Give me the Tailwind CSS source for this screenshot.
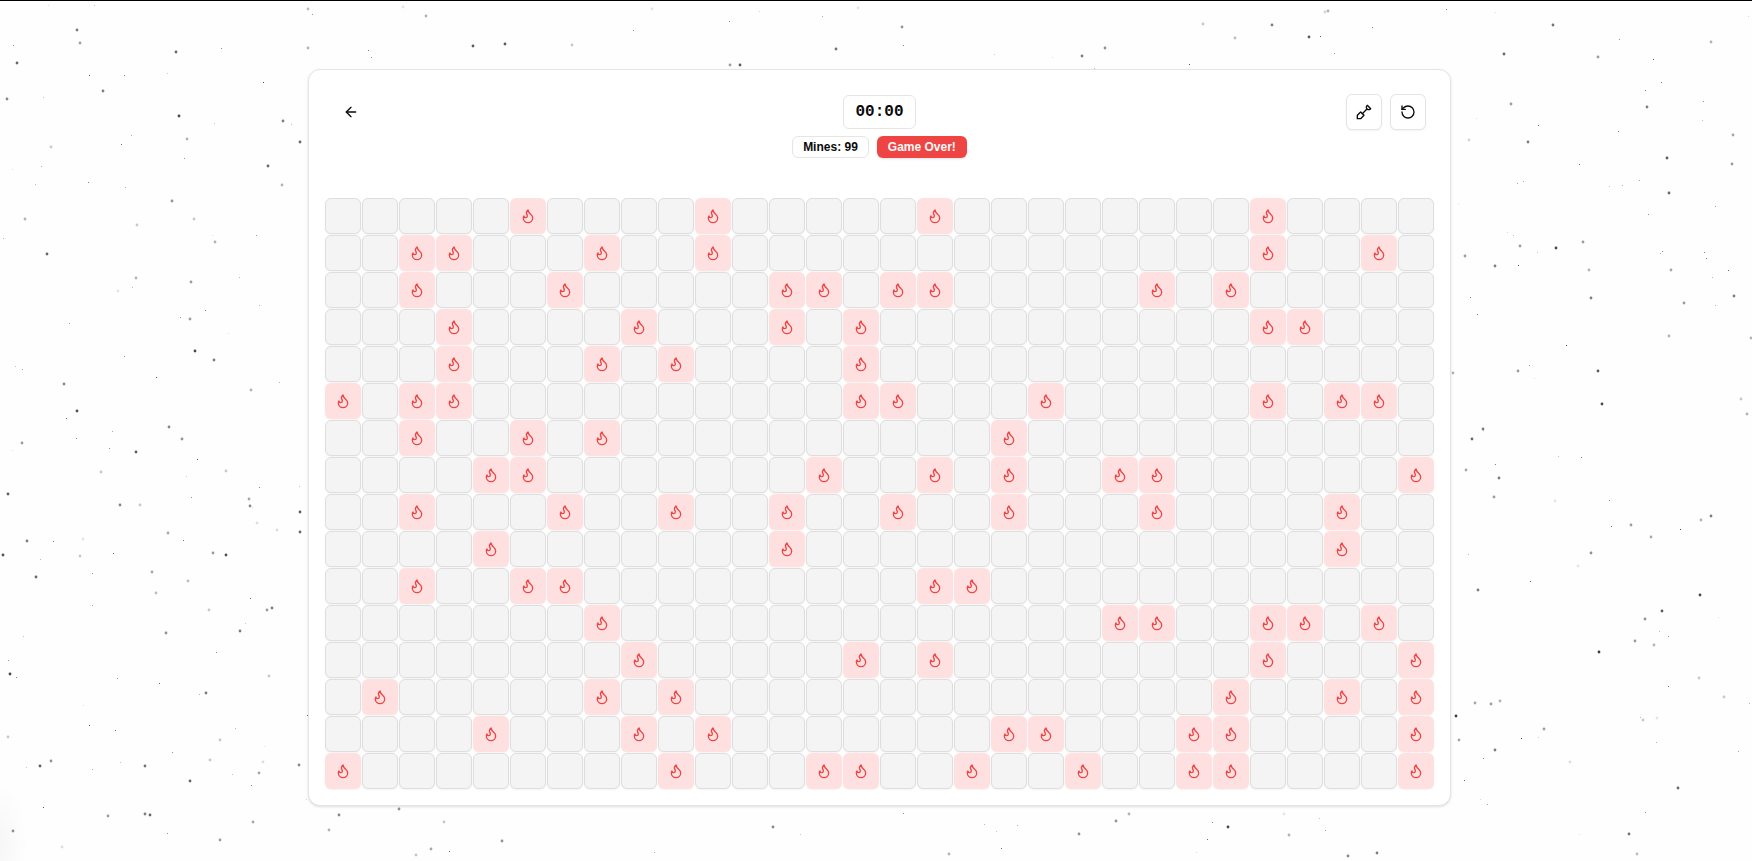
<!DOCTYPE html>
<html lang="en">
<head>
<meta charset="utf-8">
<meta name="viewport" content="width=device-width, initial-scale=1">
<title>Minesweeper</title>
<script src="https://cdn.jsdelivr.net/npm/@tailwindcss/browser@4"></script>
</head>
<body class="relative min-h-screen overflow-hidden border-t border-black bg-[#fefefe] font-['Liberation_Sans',sans-serif] text-neutral-950">
<svg id="stars" class="absolute inset-0 -mt-px h-full w-full" aria-hidden="true"></svg>
<div class="absolute bottom-0 left-0 h-20 w-7 bg-radial-[at_0%_80%] from-black/3 to-transparent to-70%" aria-hidden="true"></div>

<main class="relative flex min-h-[860px] items-start justify-center pt-17 pl-[7px]">
  <section class="rounded-xl border border-neutral-200 bg-white shadow">
    <header class="grid grid-cols-[1fr_auto_1fr] items-start p-6">
      <button type="button" aria-label="Back" class="flex size-9 items-center justify-center rounded-md">
        <svg class="size-4" viewBox="0 0 24 24" fill="none" stroke="currentColor" stroke-width="2" stroke-linecap="round" stroke-linejoin="round"><path d="m12 19-7-7 7-7"/><path d="M19 12H5"/></svg>
      </button>
      <div class="flex flex-col items-center gap-[7px] pt-px">
        <div class="rounded-md border border-neutral-200 px-[11px] py-0.5 font-['Liberation_Mono',monospace] text-base leading-7 font-bold">00:00</div>
        <div class="flex gap-2 text-xs leading-4 font-bold">
          <div class="rounded-md border border-neutral-200 px-2.5 py-0.5">Mines: 99</div>
          <div class="rounded-md border border-transparent bg-[#ef4444] px-2.5 py-0.5 text-neutral-50 shadow">Game Over!</div>
        </div>
      </div>
      <div class="flex justify-end gap-2">
        <button type="button" aria-label="Dig" class="flex size-9 items-center justify-center rounded-md border border-neutral-200 bg-white shadow-xs">
          <svg class="size-4" viewBox="0 0 24 24" fill="none" stroke="currentColor" stroke-width="2" stroke-linecap="round" stroke-linejoin="round"><path d="M2 22v-5l5-5 5 5-5 5z"/><path d="M9.5 14.5 16 8"/><path d="m17 2 5 5-.5.5a3.53 3.53 0 0 1-5 0 3.53 3.53 0 0 1 0-5L17 2"/></svg>
        </button>
        <button type="button" aria-label="Restart" class="flex size-9 items-center justify-center rounded-md border border-neutral-200 bg-white shadow-xs">
          <svg class="size-4" viewBox="0 0 24 24" fill="none" stroke="currentColor" stroke-width="2" stroke-linecap="round" stroke-linejoin="round"><path d="M3 12a9 9 0 1 0 9-9 9.75 9.75 0 0 0-6.74 2.74L3 8"/><path d="M3 3v5h5"/></svg>
        </button>
      </div>
    </header>
    <div id="board" class="grid grid-cols-[repeat(30,auto)] gap-px p-4"></div>
  </section>
</main>

<script>
// Mine columns for each board row
const mines = [
  [5,10,16,25],
  [2,3,7,10,25,28],
  [2,6,12,13,15,16,22,24],
  [3,8,12,14,25,26],
  [3,7,9,14],
  [0,2,3,14,15,19,25,27,28],
  [2,5,7,18],
  [4,5,13,16,18,21,22,29],
  [2,6,9,12,15,18,22,27],
  [4,12,27],
  [2,5,6,16,17],
  [7,21,22,25,26,28],
  [8,14,16,25,29],
  [1,7,9,24,27,29],
  [4,8,10,18,19,23,24,29],
  [0,9,13,14,17,20,23,24,29]
];
const flame = '<svg class="size-4" viewBox="0 0 24 24" fill="none" stroke="currentColor" stroke-width="2" stroke-linecap="round" stroke-linejoin="round"><path d="M8.5 14.5A2.5 2.5 0 0 0 11 12c0-1.38-.5-2-1-3-1.072-2.143-.224-4.054 2-6 .5 2.5 2 4.9 4 6.5 2 1.6 3 3.5 3 5.5a7 7 0 1 1-14 0c0-1.153.433-2.294 1-3a2.5 2.5 0 0 0 2.5 2.5z"/></svg>';
let cells = '';
mines.forEach((cols, r) => {
  for (let c = 0; c < 30; c++) {
    cells += cols.includes(c)
      ? `<button type="button" aria-label="Mine, row ${r + 1}, column ${c + 1}" class="flex size-9 items-center justify-center rounded-md bg-[#ffe0e0] text-[#ef4444] shadow-xs">${flame}</button>`
      : `<button type="button" aria-label="Row ${r + 1}, column ${c + 1}" class="size-9 rounded-md border border-[#dedede] bg-[#f4f4f4] shadow-xs"></button>`;
  }
});
document.getElementById('board').innerHTML = cells;

// Star field: x, y, opacity in percent
const large = [
  77,30,60, 80,43,45, 176,52,70, 17,63,70, 103,91,60, 7,99,55, 179,116,85, 283,121,60, 187,139,35, 51,147,25,
  300,142,70, 268,166,70, 282,185,35, 172,201,50, 25,219,35, 194,219,25, 137,225,25, 215,242,35, 47,254,70,
  136,278,35, 191,282,45, 118,291,12, 190,319,45, 195,351,85, 214,360,60, 64,384,55, 251,390,35, 77,411,80,
  169,427,55, 308,9,30, 308,48,35,
  22,443,45, 182,439,50, 136,452,75, 101,472,25, 226,471,25, 8,494,75, 120,505,55, 140,505,25, 249,499,40,
  250,506,55, 300,512,75, 257,523,15, 277,530,15, 300,532,70, 168,533,40, 27,541,60, 83,539,12, 3,555,80,
  80,556,25, 213,553,45, 226,555,80, 36,577,70, 152,572,40, 188,581,30, 156,593,30, 209,610,25, 267,610,45,
  272,608,60, 166,633,50, 240,631,60, 10,674,85, 269,676,25, 206,693,60, 8,737,25, 220,740,25, 51,761,50,
  40,766,75, 145,766,65, 210,760,25, 263,762,15, 299,765,55, 259,773,40, 190,781,70, 108,816,45, 145,814,60,
  150,815,70, 253,822,40, 13,831,50, 220,840,45, 62,847,15,
  1553,25,65, 1711,42,35, 1504,54,70, 1598,57,45, 1511,104,45, 1647,107,60, 1469,140,20, 1528,142,60,
  1733,135,40, 1667,158,75, 1732,164,45, 1669,193,70, 1520,246,45, 1583,242,45, 1556,248,85, 1465,256,45,
  1495,266,60, 1589,270,35, 1671,270,40, 1591,298,60, 1734,296,60, 1684,303,45, 1669,336,35, 1751,338,35,
  1453,373,35, 1518,371,45, 1598,371,75, 1741,399,25, 1602,404,85, 1747,414,35, 1483,429,60,
  1472,439,70, 1466,470,40, 1499,478,60, 1494,497,45, 1555,501,12, 1711,516,60, 1701,520,35, 1631,525,45,
  1651,537,40, 1591,553,50, 1578,566,12, 1478,590,60, 1700,595,85, 1662,611,75, 1645,619,50, 1635,641,45,
  1654,645,35, 1599,652,90, 1699,678,25, 1475,703,40, 1491,704,45, 1500,701,35, 1724,697,25, 1456,716,90,
  1643,720,25, 1657,718,12, 1544,729,45, 1459,740,40, 1495,750,60, 1570,762,15, 1678,788,70, 1629,834,65,
  1637,854,30,
  403,7,12, 426,16,35, 473,46,75, 505,44,75, 572,45,25, 652,9,12, 730,65,45, 740,65,75, 836,49,65, 858,8,12,
  902,27,50, 1082,56,60, 1105,48,50, 1203,24,25, 1235,38,30, 1272,25,60, 1309,37,75, 1325,12,20, 1328,11,35,
  339,815,55, 399,809,50, 329,830,35, 444,822,25, 502,841,50, 431,849,40, 416,855,25, 773,827,55,
  1129,814,35, 1116,821,50, 1079,834,50, 1228,827,85, 1284,814,12, 1289,835,35, 949,854,35, 1377,853,60, 1348,856,55
];
const small = [
  13,45,50, 94,5,30, 48,5,15, 221,48,60, 89,75,80, 124,75,60, 167,73,25, 263,82,90, 43,97,30, 214,123,30, 291,124,30,
  131,135,40, 121,144,70, 184,158,50, 41,166,40, 12,169,15, 35,184,30, 88,182,60, 125,187,40, 3,238,35, 212,235,15,
  256,235,45, 239,277,35, 132,287,30, 259,305,35, 205,310,60, 180,317,50, 69,323,45, 228,333,15, 124,356,50,
  15,366,30, 22,369,45, 156,377,85, 279,382,35, 66,418,70,
  76,438,60, 112,431,40, 12,450,15, 109,448,60, 197,459,80, 186,476,25, 259,487,60, 299,486,30, 191,497,55,
  252,507,20, 53,541,60, 183,540,70, 113,553,75, 40,559,35, 92,573,50, 92,605,45, 250,598,70, 245,623,25,
  23,636,30, 216,652,55, 8,660,50, 16,677,60, 117,678,50, 159,683,75, 199,694,35, 83,705,15, 89,725,80, 115,730,65,
  235,728,35, 307,715,70, 172,752,55, 264,746,12, 26,767,25, 120,762,30, 92,769,40, 232,774,30, 251,785,60,
  43,807,80, 167,833,55, 306,799,20,
  1446,9,40, 1495,12,15, 1748,16,20, 1619,39,55, 1653,59,80, 1661,82,60, 1645,90,60, 1703,101,50, 1476,118,15,
  1538,125,70, 1702,120,30, 1618,131,60, 1579,164,70, 1517,183,40, 1523,181,40, 1609,186,30, 1622,185,40,
  1639,180,40, 1458,203,12, 1715,206,45, 1648,214,55, 1507,232,20, 1513,235,35, 1537,252,30, 1518,265,80,
  1660,253,40, 1662,251,55, 1704,252,60, 1706,258,60, 1728,270,75, 1712,277,35, 1470,297,60, 1715,305,35,
  1477,314,60, 1566,345,85, 1529,365,50, 1534,378,15, 1483,430,30, 1558,456,30, 1581,457,60, 1495,464,60,
  1609,500,55, 1611,526,70, 1680,529,90, 1468,554,35, 1530,581,75, 1718,617,15, 1659,631,35, 1668,636,50,
  1668,686,70, 1749,703,35, 1640,717,35, 1521,738,95, 1538,737,25, 1656,742,35, 1738,751,40, 1483,758,60,
  1464,780,75, 1480,799,20, 1487,804,40, 1645,812,50, 1579,834,15,
  312,14,50, 368,50,65, 371,57,55, 633,30,55, 729,21,55, 759,11,20, 822,16,40, 903,45,60, 994,54,25, 1052,57,15,
  1094,68,35, 1189,64,80, 1320,36,80, 1334,53,50, 1372,27,60, 1446,9,30,
  449,851,70, 654,852,40, 800,834,25, 903,813,55, 984,824,35, 996,831,25, 1017,825,40, 1001,848,70, 1212,822,60,
  1207,839,70, 1319,818,30, 1325,830,45, 1196,852,20, 1272,860,20
];
let dots = '';
for (let i = 0; i < large.length; i += 3)
  dots += `<circle cx="${large[i]}" cy="${large[i + 1]}" r="1.4" fill-opacity="${large[i + 2] * 0.85 / 100}"/>`;
for (let i = 0; i < small.length; i += 3)
  dots += `<rect x="${small[i]}" y="${small[i + 1]}" width="1" height="1" fill-opacity="${small[i + 2] * 0.8 / 100}"/>`;
document.getElementById('stars').innerHTML = dots;
</script>
</body>
</html>
